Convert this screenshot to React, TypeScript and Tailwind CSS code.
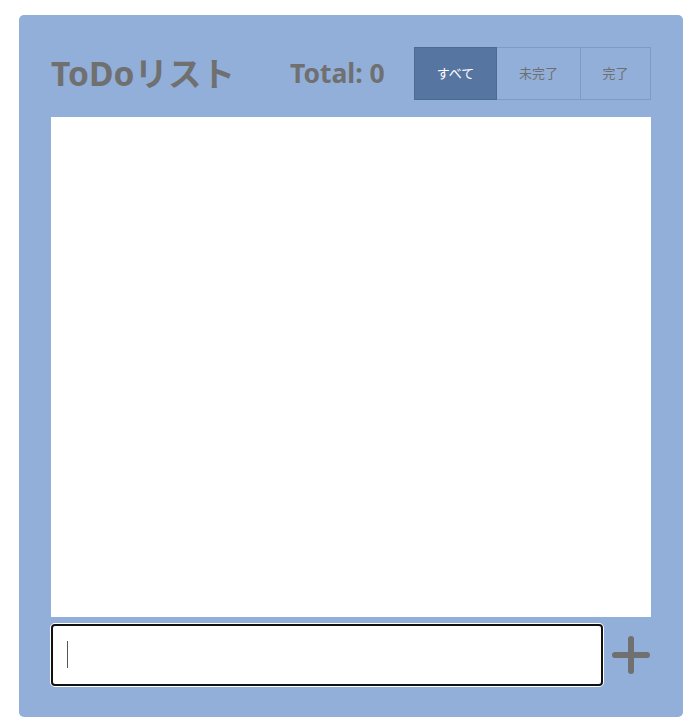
const filters = [
  { label: "すべて", width: "w-[83px]", active: true },
  { label: "未完了", width: "w-[84px]", active: false },
  { label: "完了", width: "w-[70px]", active: false },
];

const font = "font-['Noto_Sans','Noto_Sans_CJK_JP',sans-serif]";

export default function App() {
  return (
    <div className={`min-h-[725px] bg-white pt-[15px] pl-[19px] ${font}`}>
      <div className="w-[664px] rounded-[5px] bg-[#92afd9] px-8 pt-8 pb-[31px]">
        <div className="flex h-[53px] items-center">
          <h1 className="w-[239px] text-[33.5px] font-bold leading-none text-[#707070]">ToDoリスト</h1>
          <p className="text-[26.5px] font-bold leading-none text-[#707070]">Total: 0</p>
          <div className="ml-auto flex h-full">
            {filters.map((f) => (
              <button
                key={f.label}
                className={`${f.width} h-full border text-[13px] ${
                  f.active
                    ? "border-[#4b6a94] bg-[#5775a1] text-white"
                    : "border-[#7d9bc6] border-l-0 bg-[#92afd9] text-[#6f6f6f]"
                }`}
              >
                {f.label}
              </button>
            ))}
          </div>
        </div>

        <div className="mt-[17px] h-[500px] bg-white" />

        <div className="mt-[7px] flex items-center">
          <div className="relative w-[552px]">
            <input
              type="text"
              className="h-[62px] w-full rounded-[4px] border-2 border-[#111] bg-white px-4 text-lg outline-none shadow-[0_0_0_1px_white]"
            />
            <span className="pointer-events-none absolute left-[16px] top-[17px] h-[27px] w-px bg-[#555]" />
          </div>
          <svg viewBox="0 0 40 40" className="ml-[8px] h-[40px] w-[40px] text-[#707070]">
            <path d="M20 4v32M4 20h32" stroke="currentColor" strokeWidth="6" strokeLinecap="round" />
          </svg>
        </div>
      </div>
    </div>
  );
}
